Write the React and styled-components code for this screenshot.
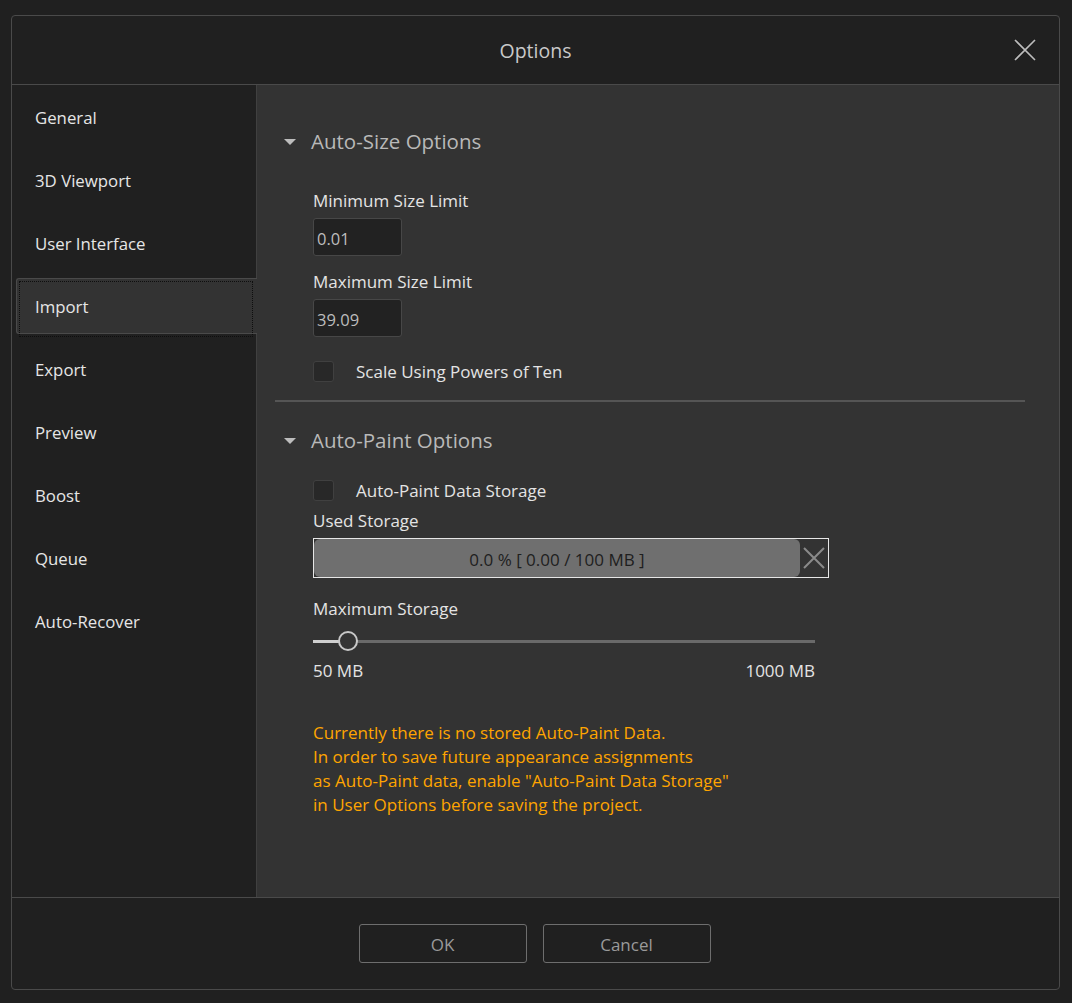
import React from "react";
import styled, { createGlobalStyle } from "styled-components";

const GlobalStyle = createGlobalStyle`
  html, body {
    margin: 0;
    padding: 0;
    background: #202020;
  }
  body {
    font-family: "Open Sans", "Noto Sans", "Liberation Sans", sans-serif;
  }
`;

const Dialog = styled.div`
  box-sizing: border-box;
  margin: 15px 0 0 11px;
  width: 1049px;
  height: 975px;
  border: 1px solid #4a4a4a;
  border-radius: 4px;
  display: flex;
  flex-direction: column;
  background: #202020;
  overflow: hidden;
`;

const Header = styled.div`
  position: relative;
  height: 69px;
  flex: none;
  display: flex;
  align-items: center;
  justify-content: center;
  border-bottom: 1px solid #4a4a4a;
  box-sizing: border-box;
`;

const Title = styled.div`
  color: #c9c9c9;
  font-size: 19.5px;
  margin-top: 1px;
`;

const CloseButton = styled.button`
  position: absolute;
  right: 22px;
  top: 22px;
  width: 24px;
  height: 24px;
  padding: 0;
  border: none;
  background: none;
  display: flex;
  align-items: center;
  justify-content: center;
`;

const Body = styled.div`
  display: flex;
  height: 812px;
  flex: none;
`;

const Sidebar = styled.div`
  width: 245px;
  flex: none;
  box-sizing: border-box;
  border-right: 1px solid #404040;
  display: flex;
  flex-direction: column;
`;

const NavItem = styled.div`
  position: relative;
  height: 63px;
  display: flex;
  align-items: center;
  padding-left: 23px;
  padding-top: 1px;
  color: #e6e6e6;
  font-size: 16.8px;
  box-sizing: border-box;
  ${({ $active }) =>
    $active &&
    `
    &::before {
      content: "";
      position: absolute;
      left: 4px;
      right: -1px;
      top: 4px;
      bottom: 3px;
      background: #333333;
      border: 1px solid #4a4a4a;
      border-right: none;
      border-radius: 3px 0 0 3px;
    }
    &::after {
      content: "";
      position: absolute;
      left: 7px;
      right: 3px;
      top: 7px;
      bottom: 0px;
      border: 1px dotted #0e0e0e;
    }
  `}
`;

const NavLabel = styled.span`
  position: relative;
  z-index: 1;
`;

const Content = styled.div`
  flex: 1;
  background: #333333;
  padding: 42px 34px 0 18px;
  display: flex;
  flex-direction: column;
`;

const SectionHead = styled.div`
  display: flex;
  align-items: center;
  height: 28px;
  margin-top: ${({ $mt }) => $mt || 0}px;
  padding-left: 9px;
  color: #b9b9b9;
  font-size: 20.5px;
`;

const Caret = styled.span`
  width: 0;
  height: 0;
  border-left: 6px solid transparent;
  border-right: 6px solid transparent;
  border-top: 6px solid #bdbdbd;
  margin-right: 15px;
  margin-top: 1px;
`;

const Block = styled.div`
  padding-left: 38px;
  display: flex;
  flex-direction: column;
  align-items: flex-start;
`;

const Label = styled.div`
  height: 22px;
  line-height: 24px;
  color: #e4e4e4;
  font-size: 17px;
  margin-top: ${({ $mt }) => $mt || 0}px;
`;

const NumberInput = styled.div`
  box-sizing: border-box;
  width: 89px;
  height: 38px;
  margin-top: ${({ $mt }) => $mt || 0}px;
  background: #222222;
  border: 1px solid #474747;
  border-radius: 3px;
  color: #bdbdbd;
  font-size: 16.5px;
  display: flex;
  align-items: center;
  padding: 2px 0 0 3px;
`;

const CheckRow = styled.label`
  display: flex;
  align-items: center;
  height: 22px;
  margin-top: ${({ $mt }) => $mt || 0}px;
  color: #e4e4e4;
  font-size: 17px;
`;

const CheckBox = styled.span`
  box-sizing: border-box;
  width: 21px;
  height: 21px;
  background: #282828;
  border: 1px solid #404040;
  border-radius: 3px;
  margin-right: 22px;
`;

const Divider = styled.div`
  height: 2px;
  background: #555555;
  margin-top: 18px;
`;

const Progress = styled.div`
  box-sizing: border-box;
  width: 516px;
  height: 40px;
  margin-top: 7px;
  border: 1px solid #e6e6e6;
  display: flex;
  align-items: stretch;
`;

const ProgressFill = styled.div`
  flex: 1;
  background: #6f6f6f;
  border-radius: 6px;
  display: flex;
  align-items: center;
  justify-content: center;
  padding-top: 2px;
  color: #1e1e1e;
  font-size: 17px;
`;

const ClearButton = styled.div`
  width: 28px;
  flex: none;
  display: flex;
  align-items: center;
  justify-content: center;
  background: #333333;
`;

const Slider = styled.div`
  position: relative;
  width: 502px;
  height: 20px;
  margin-top: 12px;
`;

const Track = styled.div`
  position: absolute;
  left: 0;
  right: 0;
  top: 9px;
  height: 3px;
  background: #6a6a6a;
`;

const TrackFill = styled.div`
  position: absolute;
  left: 0;
  top: 9px;
  height: 3px;
  background: #cfcfcf;
`;

const Thumb = styled.div`
  position: absolute;
  top: 0;
  width: 20px;
  height: 20px;
  box-sizing: border-box;
  border: 2px solid #c8c8c8;
  border-radius: 50%;
  background: #343434;
  transform: translateX(-50%);
`;

const Range = styled.div`
  width: 502px;
  display: flex;
  justify-content: space-between;
  margin-top: 8px;
  height: 22px;
  line-height: 24px;
  color: #e4e4e4;
  font-size: 17px;
`;

const Notice = styled.div`
  margin-top: 40px;
  color: #ffa500;
  font-size: 17px;
  line-height: 24px;
`;

const Footer = styled.div`
  flex: 1;
  border-top: 1px solid #4a4a4a;
  display: flex;
  justify-content: center;
  align-items: flex-start;
  gap: 16px;
  padding-top: 26px;
  padding-right: 2px;
`;

const FooterButton = styled.button`
  box-sizing: border-box;
  width: 168px;
  height: 39px;
  padding-top: 2px;
  background: transparent;
  border: 1px solid #6e6e6e;
  border-radius: 3px;
  color: #9a9a9a;
  font-family: inherit;
  font-size: 17px;
`;

const navItems = [
  "General",
  "3D Viewport",
  "User Interface",
  "Import",
  "Export",
  "Preview",
  "Boost",
  "Queue",
  "Auto-Recover",
];

const sliderPos = 35;

export default function App() {
  return (
    <>
      <GlobalStyle />
      <Dialog>
        <Header>
          <Title>Options</Title>
          <CloseButton>
            <svg width="22" height="22" viewBox="0 0 22 22">
              <path
                d="M1 1 L21 21 M21 1 L1 21"
                stroke="#bdbdbd"
                strokeWidth="1.6"
                fill="none"
              />
            </svg>
          </CloseButton>
        </Header>
        <Body>
          <Sidebar>
            {navItems.map((item) => (
              <NavItem key={item} $active={item === "Import"}>
                <NavLabel>{item}</NavLabel>
              </NavItem>
            ))}
          </Sidebar>
          <Content>
            <SectionHead>
              <Caret />
              Auto-Size Options
            </SectionHead>
            <Block>
              <Label $mt={34}>Minimum Size Limit</Label>
              <NumberInput $mt={7}>0.01</NumberInput>
              <Label $mt={14}>Maximum Size Limit</Label>
              <NumberInput $mt={7}>39.09</NumberInput>
              <CheckRow $mt={23}>
                <CheckBox />
                Scale Using Powers of Ten
              </CheckRow>
            </Block>
            <Divider />
            <SectionHead $mt={24}>
              <Caret />
              Auto-Paint Options
            </SectionHead>
            <Block>
              <CheckRow $mt={25}>
                <CheckBox />
                Auto-Paint Data Storage
              </CheckRow>
              <Label $mt={8}>Used Storage</Label>
              <Progress>
                <ProgressFill>0.0 % [ 0.00 / 100 MB ]</ProgressFill>
                <ClearButton>
                  <svg width="22" height="22" viewBox="0 0 22 22">
                    <path
                      d="M1 1 L21 21 M21 1 L1 21"
                      stroke="#8a8a8a"
                      strokeWidth="2"
                      fill="none"
                    />
                  </svg>
                </ClearButton>
              </Progress>
              <Label $mt={19}>Maximum Storage</Label>
              <Slider>
                <Track />
                <TrackFill style={{ width: `${sliderPos}px` }} />
                <Thumb style={{ left: `${sliderPos}px` }} />
              </Slider>
              <Range>
                <span>50 MB</span>
                <span>1000 MB</span>
              </Range>
              <Notice>
                Currently there is no stored Auto-Paint Data.
                <br />
                In order to save future appearance assignments
                <br />
                as Auto-Paint data, enable "Auto-Paint Data Storage"
                <br />
                in User Options before saving the project.
              </Notice>
            </Block>
          </Content>
        </Body>
        <Footer>
          <FooterButton>OK</FooterButton>
          <FooterButton>Cancel</FooterButton>
        </Footer>
      </Dialog>
    </>
  );
}
